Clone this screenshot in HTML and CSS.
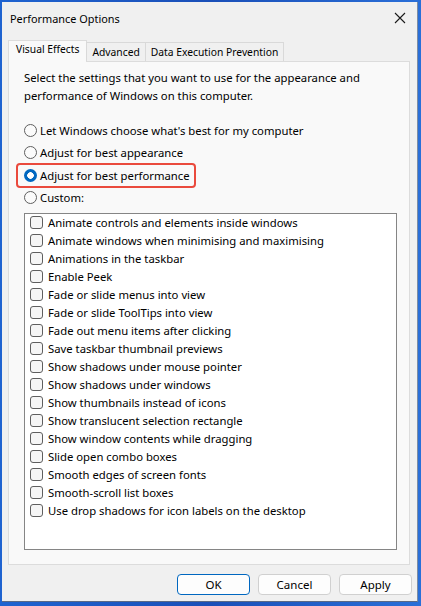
FILE: index.html
```html
<!DOCTYPE html>
<html>
<head>
<meta charset="utf-8">
<title>Performance Options</title>
<link rel="stylesheet" href="styles.css">
</head>
<body>
<div class="window">
  <div class="titlebar">
    <span class="title">Performance Options</span>
    <span class="close" aria-label="Close">
      <svg width="12" height="12" viewBox="0 0 12 12"><path d="M1 1L11 11M11 1L1 11" stroke="#1a1a1a" stroke-width="1.1" fill="none"/></svg>
    </span>
  </div>
  <div class="tabs">
    <div class="tab selected">Visual Effects</div>
    <div class="tab">Advanced</div>
    <div class="tab">Data Execution Prevention</div>
  </div>
  <div class="panel">
    <p class="desc">Select the settings that you want to use for the appearance and performance of Windows on this computer.</p>
    <div class="radios">
      <div class="radio"><span class="dot"></span><span>Let Windows choose what's best for my computer</span></div>
      <div class="radio"><span class="dot"></span><span>Adjust for best appearance</span></div>
      <div class="radio highlight"><span class="dot checked"></span><span>Adjust for best performance</span></div>
      <div class="radio"><span class="dot"></span><span>Custom:</span></div>
    </div>
    <div class="listbox">
      <div class="item"><span class="box"></span>Animate controls and elements inside windows</div>
      <div class="item"><span class="box"></span>Animate windows when minimising and maximising</div>
      <div class="item"><span class="box"></span>Animations in the taskbar</div>
      <div class="item"><span class="box"></span>Enable Peek</div>
      <div class="item"><span class="box"></span>Fade or slide menus into view</div>
      <div class="item"><span class="box"></span>Fade or slide ToolTips into view</div>
      <div class="item"><span class="box"></span>Fade out menu items after clicking</div>
      <div class="item"><span class="box"></span>Save taskbar thumbnail previews</div>
      <div class="item"><span class="box"></span>Show shadows under mouse pointer</div>
      <div class="item"><span class="box"></span>Show shadows under windows</div>
      <div class="item"><span class="box"></span>Show thumbnails instead of icons</div>
      <div class="item"><span class="box"></span>Show translucent selection rectangle</div>
      <div class="item"><span class="box"></span>Show window contents while dragging</div>
      <div class="item"><span class="box"></span>Slide open combo boxes</div>
      <div class="item"><span class="box"></span>Smooth edges of screen fonts</div>
      <div class="item"><span class="box"></span>Smooth-scroll list boxes</div>
      <div class="item"><span class="box"></span>Use drop shadows for icon labels on the desktop</div>
    </div>
  </div>
  <div class="buttons">
    <button class="btn default">OK</button>
    <button class="btn">Cancel</button>
    <button class="btn">Apply</button>
  </div>
</div>
</body>
</html>
```
FILE: styles.css
```css
html, body {
  margin: 0;
  padding: 0;
  width: 421px;
  height: 606px;
  overflow: hidden;
}
body {
  background: linear-gradient(90deg, #1f63d0 0%, #1a4fb8 50%, #2a6fd8 100%);
  font-family: "Noto Sans", "DejaVu Sans", sans-serif;
  font-size: 11.3px;
  color: #000;
}
.window {
  margin: 2px 0 0 2px;
  width: 415px;
  height: 599px;
  background: #f0f0f0;
  border-right: 1px solid #7d8da3;
  border-bottom: 1px solid #5a6a86;
  display: flex;
  flex-direction: column;
  box-sizing: content-box;
}
.titlebar {
  height: 38px;
  display: flex;
  align-items: center;
  justify-content: space-between;
  padding: 0 9px 0 8px;
  background: #f0f0f0;
  flex: none;
  box-sizing: border-box;
}
.title {
  font-size: 10.9px;
  margin-top: -6px;
}
.close {
  display: flex;
  margin-top: -6px;
  margin-right: 2px;
}
.tabs {
  display: flex;
  align-items: flex-end;
  margin-left: 6px;
  height: 21px;
  flex: none;
  position: relative;
  z-index: 1;
}
.tab {
  height: 18px;
  line-height: 19px;
  font-size: 10.3px;
  padding: 0 5px;
  border: 1px solid #d9d9d9;
  border-bottom: none;
  background: #f0f0f0;
  margin-left: -1px;
  box-sizing: content-box;
  white-space: nowrap;
}
.tab.selected {
  height: 21px;
  line-height: 17px;
  background: #f9f9f9;
  margin-left: 0;
  padding: 0 7px 0 7px;
  margin-bottom: -1px;
  border-color: #dcdcdc;
}
.panel {
  margin: 0 7px 0 6px;
  height: 504px;
  background: #f9f9f9;
  border: 1px solid #dcdcdc;
  padding: 7px 13px 0 15px;
  box-sizing: border-box;
  flex: none;
}
.desc {
  margin: 0;
  line-height: 18px;
  padding-right: 20px;
}
.radios {
  margin-top: 14px;
  display: flex;
  flex-direction: column;
}
.radio {
  height: 22.3px;
  display: flex;
  align-items: center;
  gap: 3px;
  align-self: flex-start;
  white-space: nowrap;
}
.radio.highlight {
  outline: 2px solid #ea4a3d;
  outline-offset: -1px;
  border-radius: 3px;
  margin-left: -7px;
  padding: 0 5px 0 7px;
  height: 23px;
}
.dot {
  width: 11px;
  height: 11px;
  border: 1px solid #5f5f5f;
  border-radius: 50%;
  background: #fbfbfb;
  box-sizing: content-box;
  flex: none;
}
.dot.checked {
  width: 13px;
  height: 13px;
  border: none;
  background: radial-gradient(circle, #ffffff 0 3px, #0067c0 3.6px);
}
.listbox {
  margin-top: 4px;
  width: 373px;
  height: 337px;
  background: #ffffff;
  border: 1px solid #858585;
  box-sizing: border-box;
  padding-top: 0;
}
.item {
  height: 18px;
  display: flex;
  align-items: center;
  padding-left: 5px;
  white-space: nowrap;
}
.box {
  width: 11px;
  height: 11px;
  border: 1px solid #5f5f5f;
  border-radius: 3px;
  background: #f6f6f6;
  margin-right: 5px;
  flex: none;
}
.buttons {
  display: flex;
  justify-content: flex-end;
  gap: 8px;
  padding: 9px 5px 0 0;
}
.btn {
  width: 73px;
  height: 21px;
  font-family: "Noto Sans", "DejaVu Sans", sans-serif;
  font-size: 11.5px;
  color: #000;
  background: #fdfdfd;
  border: 1px solid #d0d0d0;
  border-radius: 4px;
  padding: 0;
  line-height: 19px;
}
.btn.default {
  border: 1px solid #0067c0;
}
```
